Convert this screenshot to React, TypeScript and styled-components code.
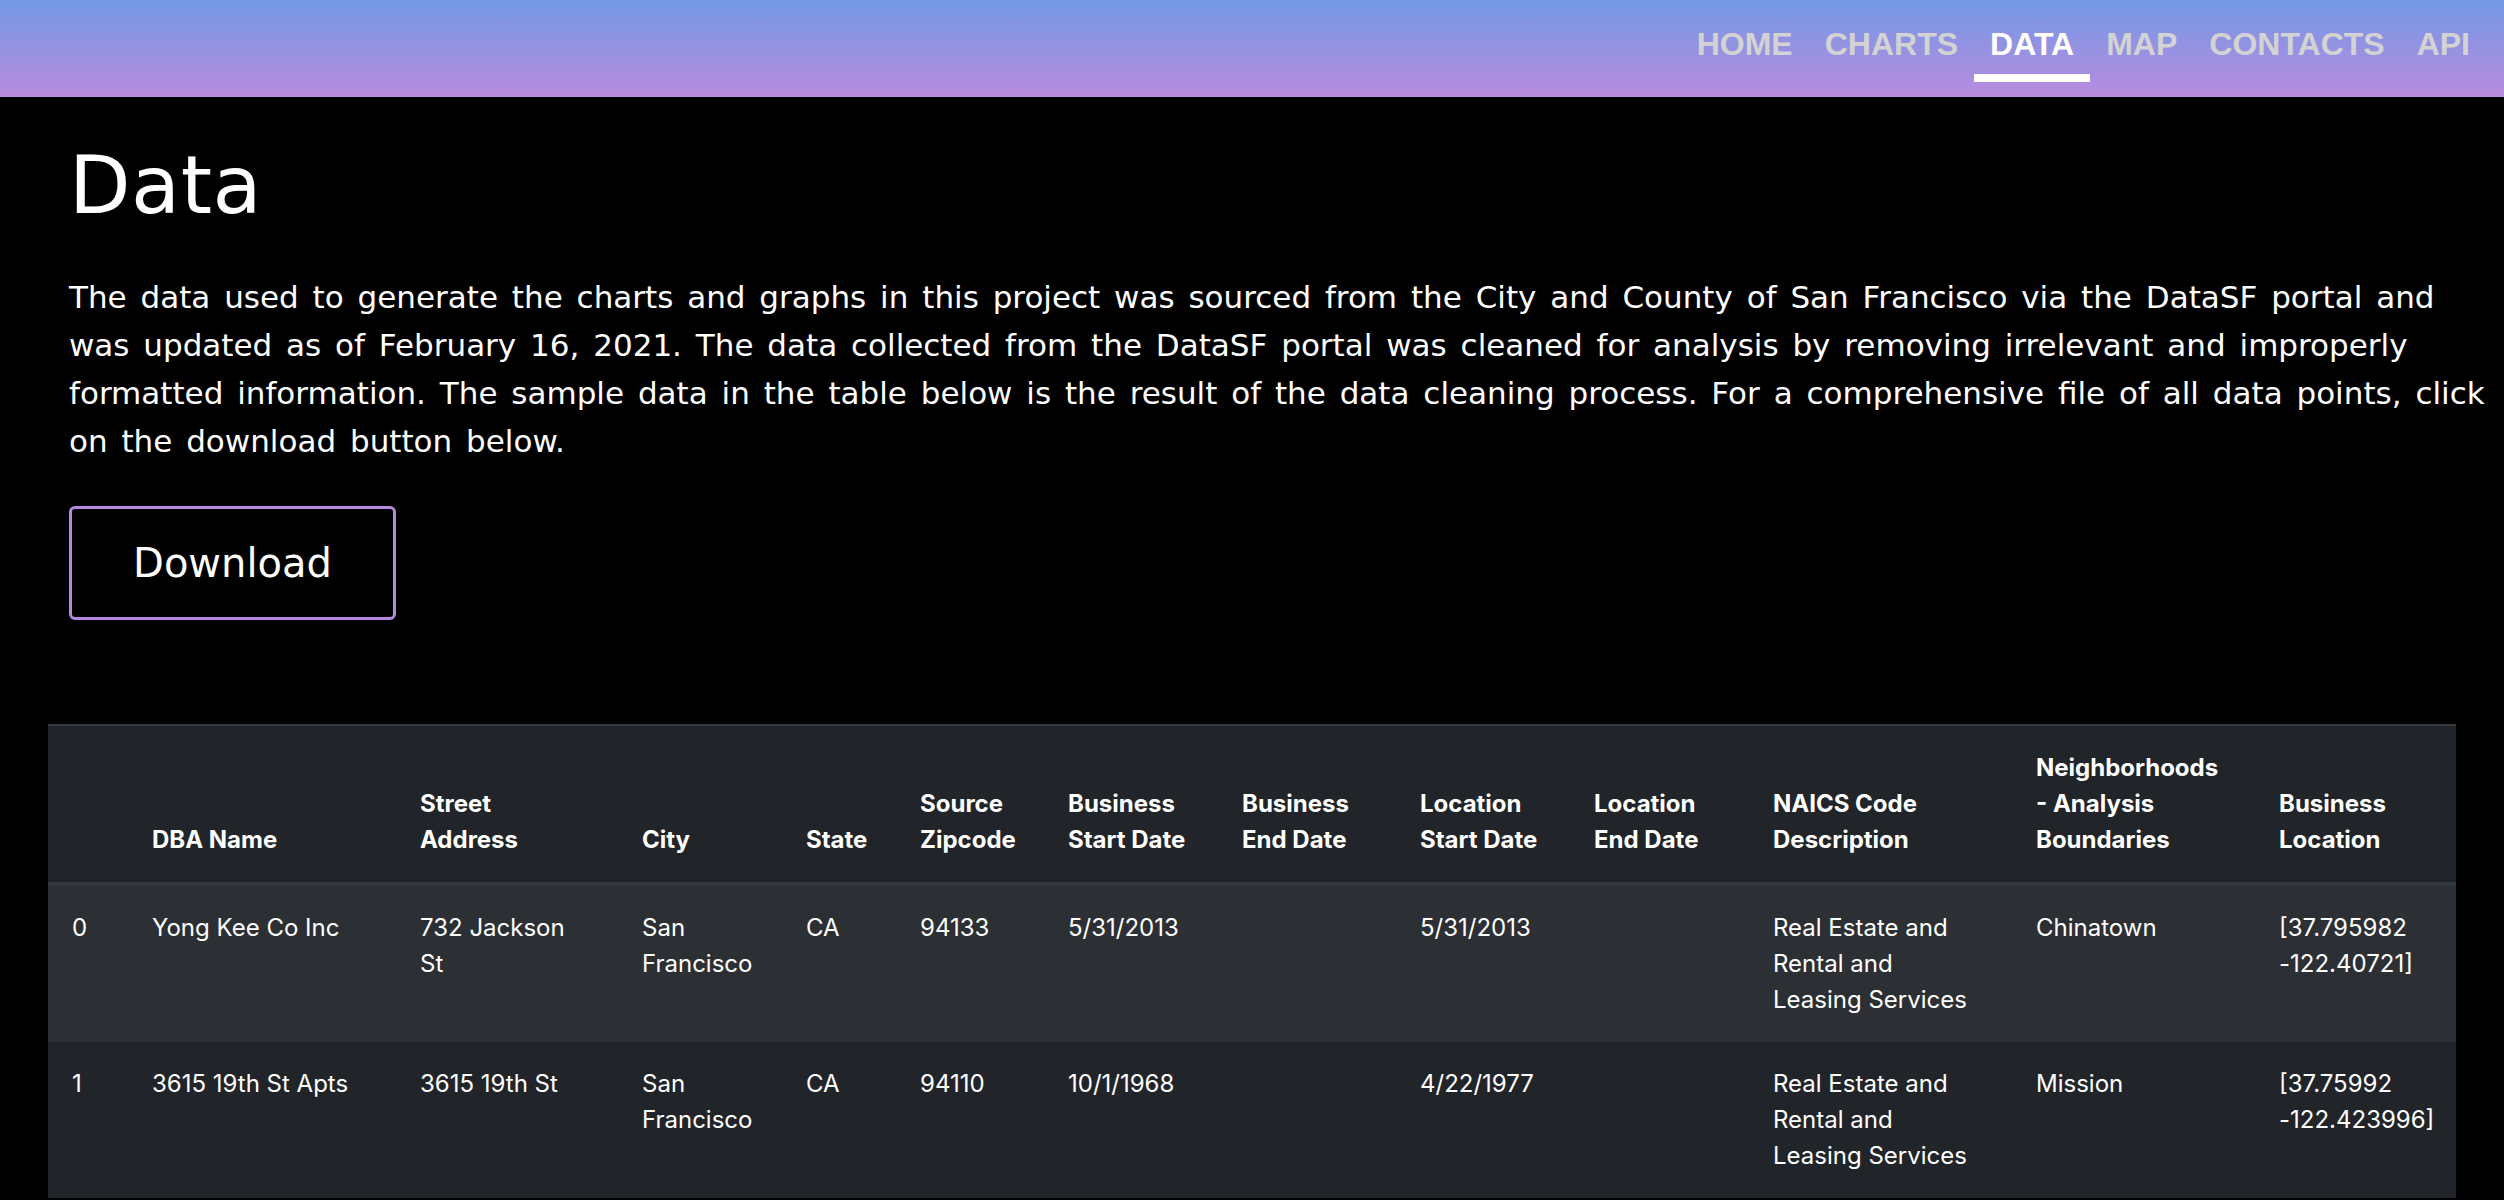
import React from 'react'
import styled, { createGlobalStyle } from 'styled-components'

const GlobalStyle = createGlobalStyle`
  html, body {
    margin: 0;
    padding: 0;
    background: #000;
  }
  body {
    font-family: Inter, "Noto Sans", sans-serif;
    color: #fff;
  }
`

const Header = styled.header`
  height: 97px;
  background: linear-gradient(180deg, #7399e6 0%, #b98bde 100%);
  display: flex;
  justify-content: flex-end;
  align-items: flex-start;
  padding: 27px 18px 0 0;
  box-sizing: border-box;
`

const Nav = styled.nav`
  display: flex;
`

const NavItem = styled.a<{ active?: boolean }>`
  display: flex;
  flex-direction: column;
  align-items: stretch;
  padding: 0 16px;
  font-family: "Liberation Sans", Arial, sans-serif;
  font-weight: 700;
  font-size: 32px;
  line-height: 34px;
  color: ${({ active }) => (active ? '#fff' : '#d3d3d3')};
  text-decoration: none;
  cursor: pointer;

  &::after {
    content: '';
    display: block;
    height: 8px;
    margin: 13px -16px 0;
    background: ${({ active }) => (active ? '#fff' : 'transparent')};
  }
`

const Main = styled.main`
  padding: 38px 48px 0;
`

const Intro = styled.section`
  padding: 0 0 0 21px;
  font-family: "DejaVu Sans", Verdana, sans-serif;
`

const Title = styled.h1`
  margin: 0;
  font-size: 80px;
  font-weight: 400;
  line-height: 101px;
  letter-spacing: 0.5px;
`

const Lead = styled.p`
  width: 2425px;
  margin: 37px 0 0;
  font-size: 31px;
  line-height: 48px;
  font-weight: 400;
  word-spacing: 4px;
`

const DownloadButton = styled.button`
  margin-top: 41px;
  width: 327px;
  height: 114px;
  background: transparent;
  border: 3px solid #b388dd;
  border-radius: 6px;
  color: #fff;
  font-family: "DejaVu Sans", Verdana, sans-serif;
  font-size: 40px;
  font-weight: 400;
  cursor: pointer;
`

const TableWrap = styled.div`
  margin-top: 104px;
`

const Table = styled.table`
  width: 2408px;
  table-layout: fixed;
  border-collapse: separate;
  border-spacing: 0;
  background: #212529;
  font-size: 24px;
  line-height: 36px;
  color: #fff;
`

const Th = styled.th`
  text-align: left;
  vertical-align: bottom;
  font-weight: 700;
  padding: 24px;
  border-top: 2px solid #32383e;
  border-bottom: 4px solid #32383e;
`

const Row = styled.tr<{ striped?: boolean }>`
  background: ${({ striped }) => (striped ? '#2c3034' : 'transparent')};

  & + & td {
    border-top: 2px solid #32383e;
  }
`

const Td = styled.td`
  vertical-align: top;
  padding: 24px;
  font-weight: 400;
`

const columns = [
  { label: '', width: 80 },
  { label: 'DBA Name', width: 268 },
  { label: 'Street Address', width: 222 },
  { label: 'City', width: 164 },
  { label: 'State', width: 114 },
  { label: 'Source Zipcode', width: 148 },
  { label: 'Business Start Date', width: 174 },
  { label: 'Business End Date', width: 178 },
  { label: 'Location Start Date', width: 174 },
  { label: 'Location End Date', width: 179 },
  { label: 'NAICS Code Description', width: 263 },
  { label: 'Neighborhoods - Analysis Boundaries', width: 243 },
  { label: 'Business Location', width: 201 },
]

const rows = [
  [
    '0',
    'Yong Kee Co Inc',
    '732 Jackson St',
    'San Francisco',
    'CA',
    '94133',
    '5/31/2013',
    '',
    '5/31/2013',
    '',
    'Real Estate and Rental and Leasing Services',
    'Chinatown',
    '[37.795982 -122.40721]',
  ],
  [
    '1',
    '3615 19th St Apts',
    '3615 19th St',
    'San Francisco',
    'CA',
    '94110',
    '10/1/1968',
    '',
    '4/22/1977',
    '',
    'Real Estate and Rental and Leasing Services',
    'Mission',
    '[37.75992 -122.423996]',
  ],
]

const links = ['HOME', 'CHARTS', 'DATA', 'MAP', 'CONTACTS', 'API']

export default function App() {
  return (
    <>
      <GlobalStyle />
      <Header>
        <Nav>
          {links.map(l => (
            <NavItem key={l} active={l === 'DATA'}>
              {l}
            </NavItem>
          ))}
        </Nav>
      </Header>
      <Main>
        <Intro>
          <Title>Data</Title>
          <Lead>
            The data used to generate the charts and graphs in this project was
            sourced from the City and County of San Francisco via the DataSF
            portal and was updated as of February 16, 2021. The data collected
            from the DataSF portal was cleaned for analysis by removing
            irrelevant and improperly formatted information. The sample data in
            the table below is the result of the data cleaning process. For a
            comprehensive file of all data points, click on the download button
            below.
          </Lead>
          <DownloadButton type="button">Download</DownloadButton>
        </Intro>
        <TableWrap>
          <Table>
            <colgroup>
              {columns.map((c, i) => (
                <col key={i} style={{ width: c.width }} />
              ))}
            </colgroup>
            <thead>
              <tr>
                {columns.map((c, i) => (
                  <Th key={i}>{c.label}</Th>
                ))}
              </tr>
            </thead>
            <tbody>
              {rows.map((r, i) => (
                <Row key={i} striped={i % 2 === 0}>
                  {r.map((cell, j) => (
                    <Td key={j}>{cell}</Td>
                  ))}
                </Row>
              ))}
            </tbody>
          </Table>
        </TableWrap>
      </Main>
    </>
  )
}
